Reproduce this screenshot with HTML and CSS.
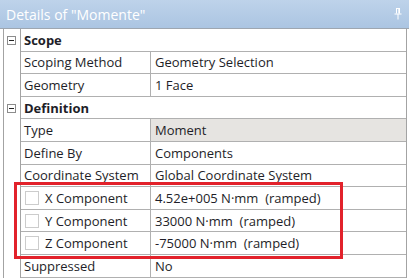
FILE: index.html
```html
<!DOCTYPE html>
<html>
<head lang="en">
    <meta charset="UTF-8">
    <title>Details of "Momente"</title>
    <link rel="stylesheet" href="styles.css">
</head>
<body>
<div id="panel">
    <div class="title">
        <span>Details of "Momente"</span>
        <svg class="pin" width="8" height="12" viewBox="0 0 8 12">
            <path d="M2 0.5h4M2.5 0.5v5M5.5 0.5v5M4.8 0.5v5M0.5 6h7M4 6v5.5" stroke="#fff" stroke-width="1" fill="none"/>
        </svg>
    </div>
    <div class="tree">
        <div class="section">
            <div class="gutter"><div class="toggle"><span class="minus"></span></div></div>
            <div class="rows">
                <div class="row head">Scope</div>
                <div class="row"><div class="key">Scoping Method</div><div class="val">Geometry Selection</div></div>
                <div class="row"><div class="key">Geometry</div><div class="val">1 Face</div></div>
            </div>
        </div>
        <div class="section">
            <div class="gutter"><div class="toggle"><span class="minus"></span></div></div>
            <div class="rows">
                <div class="row head">Definition</div>
                <div class="row"><div class="key">Type</div><div class="val fixed">Moment</div></div>
                <div class="row"><div class="key">Define By</div><div class="val">Components</div></div>
                <div class="row"><div class="key">Coordinate System</div><div class="val">Global Coordinate System</div></div>
                <div class="row"><div class="key"><span class="check"></span>X Component</div><div class="val">4.52e+005 N·mm &nbsp;(ramped)</div></div>
                <div class="row"><div class="key"><span class="check"></span>Y Component</div><div class="val">33000 N·mm &nbsp;(ramped)</div></div>
                <div class="row"><div class="key"><span class="check"></span>Z Component</div><div class="val">-75000 N·mm &nbsp;(ramped)</div></div>
                <div class="row"><div class="key">Suppressed</div><div class="val">No</div></div>
            </div>
        </div>
    </div>
    <div class="mark"></div>
</div>
</body>
</html>
```

FILE: styles.css
```css
*{
    margin: 0;
    padding: 0;
    box-sizing: border-box;
}
body{
    background: #ffffff;
    font-family: "Open Sans", "Noto Sans", sans-serif;
    font-size: 13px;
    color: #1e1e28;
}
#panel{
    position: relative;
    width: 409px;
    height: 279px;
    overflow: hidden;
}
.title{
    height: 29px;
    display: flex;
    align-items: center;
    justify-content: space-between;
    padding: 0 6px 0 6px;
    background: linear-gradient(#bed3ea, #abc5e2);
    border-bottom: 1px solid #9ea6b0;
    color: #ffffff;
    font-size: 14px;
}
.pin{
    display: block;
    margin-right: 1px;
}
.tree{
    margin-left: 3px;
    width: 404px;
    border-left: 1px solid #a3a3a3;
    border-right: 1px solid #a3a3a3;
}
.section{
    display: flex;
}
.gutter{
    width: 17px;
    border-right: 1px solid #a3a3a3;
}
.toggle{
    height: 22.6px;
    display: flex;
    align-items: center;
    padding-left: 3px;
}
.minus{
    position: relative;
    width: 9px;
    height: 9px;
    border: 1px solid #8c8c8c;
    background: #ffffff;
}
.minus:after{
    content: "";
    position: absolute;
    left: 1px;
    top: 3px;
    width: 5px;
    height: 1px;
    background: #222222;
}
.rows{
    flex: 1;
}
.row{
    display: flex;
    height: 22.6px;
    border-bottom: 1px solid #b0b0b0;
    align-items: stretch;
}
.row.head{
    align-items: center;
    padding-left: 3px;
    font-weight: bold;
}
.key{
    width: 130px;
    border-right: 1px solid #b0b0b0;
    display: flex;
    align-items: center;
    padding-left: 3px;
    white-space: nowrap;
}
.val{
    flex: 1;
    display: flex;
    align-items: center;
    padding-left: 4px;
    white-space: nowrap;
}
.val.fixed{
    background: #e6e4e1;
}
.check{
    width: 14px;
    height: 14px;
    border: 1px solid #cccccc;
    background: #ffffff;
    margin: 0 6px 0 1px;
}
.mark{
    position: absolute;
    left: 14px;
    top: 182px;
    width: 329px;
    height: 77px;
    border: 3px solid #e2222b;
}
```
